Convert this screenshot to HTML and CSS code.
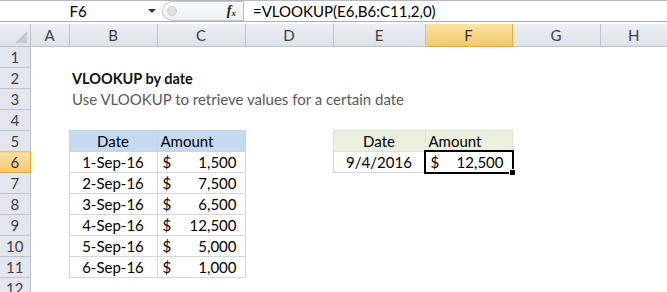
FILE: index.html
```html
<!DOCTYPE html>
<html lang="en">
<head>
    <meta charset="UTF-8">
    <title>VLOOKUP by date</title>
    <link rel="stylesheet" href="styles.css">
</head>
<body>
    <!-- Строка формул -->
    <div class="formula-bar">
        <div class="name-box">
            <span class="ref">F6</span>
            <span class="drop"></span>
        </div>
        <div class="fx-box">
            <span class="grip"></span>
            <span class="fx">f<sub>x</sub></span>
        </div>
        <div class="formula">=VLOOKUP(E6,B6:C11,2,0)</div>
    </div>

    <!-- Лист -->
    <table class="sheet">
        <colgroup>
            <col class="w-rh">
            <col class="w-a">
            <col class="w-b">
            <col class="w-c">
            <col class="w-d">
            <col class="w-e">
            <col class="w-f">
            <col class="w-g">
            <col>
        </colgroup>
        <thead>
            <tr>
                <th class="corner"><span class="tri"></span></th>
                <th>A</th><th>B</th><th>C</th><th>D</th><th>E</th>
                <th class="sel">F</th><th>G</th><th>H</th>
            </tr>
        </thead>
        <tbody>
            <tr><th>1</th><td></td><td></td><td></td><td></td><td></td><td></td><td></td><td></td></tr>
            <tr><th>2</th><td></td><td class="title">VLOOKUP by date</td><td></td><td></td><td></td><td></td><td></td><td></td></tr>
            <tr><th>3</th><td></td><td class="subtitle">Use VLOOKUP to retrieve values for a certain date</td><td></td><td></td><td></td><td></td><td></td><td></td></tr>
            <tr><th>4</th><td></td><td></td><td></td><td></td><td></td><td></td><td></td><td></td></tr>
            <tr>
                <th>5</th><td></td>
                <td class="box head-blue center">Date</td>
                <td class="box head-blue">Amount</td>
                <td></td>
                <td class="box head-green center">Date</td>
                <td class="box head-green">Amount</td>
                <td></td><td></td>
            </tr>
            <tr>
                <th class="sel">6</th><td></td>
                <td class="box center">1-Sep-16</td>
                <td class="box"><div class="acct"><span>$</span><span>1,500</span></div></td>
                <td></td>
                <td class="box center">9/4/2016</td>
                <td class="box active"><div class="acct"><span>$</span><span>12,500</span></div><span class="handle"></span></td>
                <td></td><td></td>
            </tr>
            <tr><th>7</th><td></td><td class="box center">2-Sep-16</td><td class="box"><div class="acct"><span>$</span><span>7,500</span></div></td><td></td><td></td><td></td><td></td><td></td></tr>
            <tr><th>8</th><td></td><td class="box center">3-Sep-16</td><td class="box"><div class="acct"><span>$</span><span>6,500</span></div></td><td></td><td></td><td></td><td></td><td></td></tr>
            <tr><th>9</th><td></td><td class="box center">4-Sep-16</td><td class="box"><div class="acct"><span>$</span><span>12,500</span></div></td><td></td><td></td><td></td><td></td><td></td></tr>
            <tr><th>10</th><td></td><td class="box center">5-Sep-16</td><td class="box"><div class="acct"><span>$</span><span>5,000</span></div></td><td></td><td></td><td></td><td></td><td></td></tr>
            <tr><th>11</th><td></td><td class="box center">6-Sep-16</td><td class="box"><div class="acct"><span>$</span><span>1,000</span></div></td><td></td><td></td><td></td><td></td><td></td></tr>
            <tr><th>12</th><td></td><td></td><td></td><td></td><td></td><td></td><td></td><td></td></tr>
        </tbody>
    </table>
</body>
</html>
```

FILE: styles.css
```css
body {
    font-family: Lato, "Open Sans", sans-serif;
    background-color: #fff;
    color: #000;
    margin: 0;
    padding: 0;
    overflow: hidden;
}

/* строка формул */
.formula-bar {
    display: flex;
    height: 20px;
    border-top: 1px solid #b4b9c0;
    border-bottom: 1px solid #a9aeb6;
    margin-bottom: 2px;
    font-size: 15px;
}
.name-box {
    width: 162px;
    display: flex;
    align-items: center;
}
.name-box .ref {
    flex: 1;
    text-align: center;
    padding-left: 8px;
}
.name-box .drop {
    width: 0;
    height: 0;
    border-left: 4px solid transparent;
    border-right: 4px solid transparent;
    border-top: 4px solid #333;
    margin-right: 6px;
}
.fx-box {
    width: 82px;
    display: flex;
    align-items: center;
    justify-content: space-between;
    border: 1px solid #c3c8cf;
    border-right: 1px solid #b8bdc5;
    border-radius: 10px 0 0 10px;
    background: linear-gradient(#fbfbfc, #eef0f3);
    box-sizing: border-box;
    height: 20px;
}
.fx-box .grip {
    width: 8px;
    height: 8px;
    border-radius: 50%;
    background: #dfe2e6;
    border: 1px solid #c9cdd3;
    margin-left: 4px;
}
.fx-box .fx {
    font-family: "Liberation Serif", serif;
    font-style: italic;
    font-weight: bold;
    font-size: 14px;
    margin-right: 7px;
    color: #222;
}
.fx-box .fx sub {
    font-size: 9px;
    vertical-align: -1px;
}
.formula {
    padding-left: 9px;
    line-height: 20px;
    white-space: nowrap;
}

/* лист */
.sheet {
    border-collapse: collapse;
    table-layout: fixed;
    width: 667px;
    font-size: 15px;
}
.w-rh { width: 30px; }
.w-a { width: 39px; }
.w-b { width: 88px; }
.w-c { width: 88px; }
.w-d { width: 88px; }
.w-e { width: 92px; }
.w-f { width: 87px; }
.w-g { width: 88px; }

.sheet th {
    font-weight: normal;
    color: #3f3f3f;
    background: linear-gradient(#eceff4, #dde2e9);
    border: 1px solid #bcc3cc;
    padding: 0;
}
.sheet thead th {
    height: 22px;
    border-top: none;
}
.sheet tbody th {
    height: 20px;
    border-left: none;
    background: #e3e7ed;
}
.sheet thead th:last-child {
    border-right: none;
}
.sheet th.sel {
    background: linear-gradient(#fbe2a6, #f3c868);
    border-color: #e1ab44;
    color: #333;
}
.sheet th.corner {
    position: relative;
    border-left: none;
}
.tri {
    position: absolute;
    right: 3px;
    bottom: 3px;
    width: 0;
    height: 0;
    border-left: 12px solid transparent;
    border-bottom: 12px solid #c5cad1;
}

.sheet td {
    padding: 0 3px;
    white-space: nowrap;
    overflow: visible;
    height: 20px;
}
.title {
    font-weight: bold;
    font-size: 14.5px;
    padding-left: 4px;
    color: #111;
}
.subtitle {
    color: #595959;
    padding-left: 4px;
}
.box {
    border: 1px solid #d6d6d6;
}
.center {
    text-align: center;
}
.head-blue {
    background-color: #c5d9f1;
    border-color: #c9d5e3;
}
.head-green {
    background-color: #ebf1de;
    border-color: #dde3d2;
}
.acct {
    display: flex;
    justify-content: space-between;
    padding: 0 5px 0 2px;
}
.active {
    position: relative;
}
.active::before {
    content: "";
    position: absolute;
    left: -2px;
    top: -2px;
    right: -2px;
    bottom: -2px;
    border: 2.5px solid #000;
}
.handle {
    position: absolute;
    right: -4px;
    bottom: -4px;
    width: 5px;
    height: 5px;
    background: #000;
    border: 1px solid #fff;
}
```
